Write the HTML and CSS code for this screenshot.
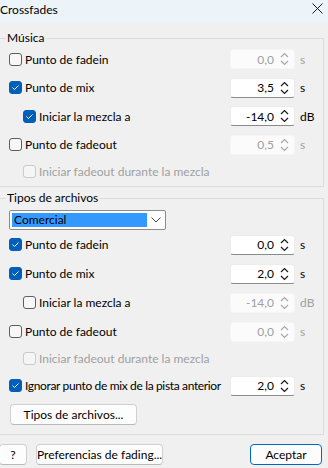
FILE: index.html
```html
<!DOCTYPE html>
<html lang="es">
<head>
    <meta charset="UTF-8">
    <title>Crossfades</title>
    <link rel="stylesheet" href="styles.css">
</head>
<body>

<div class="titlebar">
    <span class="title">Crossfades</span>
    <svg class="close" width="11" height="11" viewBox="0 0 11 11"><path d="M0.5 0.5 L10.5 10.5 M10.5 0.5 L0.5 10.5" stroke="#1a1a1a" stroke-width="1"/></svg>
</div>

<div class="group music">
    <div class="group-title">Música</div>

    <div class="row">
        <label class="check"><span class="box"></span>Punto de fadein</label>
        <div class="spin off">0,0<svg width="9" height="16" viewBox="0 0 9 16"><path d="M1 6 L4.5 2.5 L8 6 M1 10 L4.5 13.5 L8 10" fill="none" stroke="#a8a8a8" stroke-width="1.2"/></svg></div>
        <span class="unit off">s</span>
    </div>
    <div class="row">
        <label class="check"><span class="box on"><svg width="11" height="11" viewBox="0 0 11 11"><path d="M2.5 5.5 L4.5 7.5 L8.5 3.5" fill="none" stroke="#fff" stroke-width="1"/></svg></span>Punto de mix</label>
        <div class="spin">3,5<svg width="9" height="16" viewBox="0 0 9 16"><path d="M1 6 L4.5 2.5 L8 6 M1 10 L4.5 13.5 L8 10" fill="none" stroke="#1a1a1a" stroke-width="1.2"/></svg></div>
        <span class="unit">s</span>
    </div>
    <div class="row sub">
        <label class="check"><span class="box on"><svg width="11" height="11" viewBox="0 0 11 11"><path d="M2.5 5.5 L4.5 7.5 L8.5 3.5" fill="none" stroke="#fff" stroke-width="1"/></svg></span>Iniciar la mezcla a</label>
        <div class="spin">-14,0<svg width="9" height="16" viewBox="0 0 9 16"><path d="M1 6 L4.5 2.5 L8 6 M1 10 L4.5 13.5 L8 10" fill="none" stroke="#1a1a1a" stroke-width="1.2"/></svg></div>
        <span class="unit">dB</span>
    </div>
    <div class="row">
        <label class="check"><span class="box"></span>Punto de fadeout</label>
        <div class="spin off">0,5<svg width="9" height="16" viewBox="0 0 9 16"><path d="M1 6 L4.5 2.5 L8 6 M1 10 L4.5 13.5 L8 10" fill="none" stroke="#a8a8a8" stroke-width="1.2"/></svg></div>
        <span class="unit off">s</span>
    </div>
    <div class="row sub short">
        <label class="check off"><span class="box"></span>Iniciar fadeout durante la mezcla</label>
    </div>
</div>

<div class="group types">
    <div class="group-title">Tipos de archivos</div>

    <div class="select">
        <span class="selected">Comercial</span>
        <svg width="10" height="6" viewBox="0 0 10 6"><path d="M0.5 0.5 L5 5 L9.5 0.5" fill="none" stroke="#444" stroke-width="1"/></svg>
    </div>

    <div class="row">
        <label class="check"><span class="box on"><svg width="11" height="11" viewBox="0 0 11 11"><path d="M2.5 5.5 L4.5 7.5 L8.5 3.5" fill="none" stroke="#fff" stroke-width="1"/></svg></span>Punto de fadein</label>
        <div class="spin">0,0<svg width="9" height="16" viewBox="0 0 9 16"><path d="M1 6 L4.5 2.5 L8 6 M1 10 L4.5 13.5 L8 10" fill="none" stroke="#1a1a1a" stroke-width="1.2"/></svg></div>
        <span class="unit">s</span>
    </div>
    <div class="row">
        <label class="check"><span class="box on"><svg width="11" height="11" viewBox="0 0 11 11"><path d="M2.5 5.5 L4.5 7.5 L8.5 3.5" fill="none" stroke="#fff" stroke-width="1"/></svg></span>Punto de mix</label>
        <div class="spin">2,0<svg width="9" height="16" viewBox="0 0 9 16"><path d="M1 6 L4.5 2.5 L8 6 M1 10 L4.5 13.5 L8 10" fill="none" stroke="#1a1a1a" stroke-width="1.2"/></svg></div>
        <span class="unit">s</span>
    </div>
    <div class="row sub">
        <label class="check"><span class="box"></span>Iniciar la mezcla a</label>
        <div class="spin off">-14,0<svg width="9" height="16" viewBox="0 0 9 16"><path d="M1 6 L4.5 2.5 L8 6 M1 10 L4.5 13.5 L8 10" fill="none" stroke="#a8a8a8" stroke-width="1.2"/></svg></div>
        <span class="unit off">dB</span>
    </div>
    <div class="row">
        <label class="check"><span class="box"></span>Punto de fadeout</label>
        <div class="spin off">0,0<svg width="9" height="16" viewBox="0 0 9 16"><path d="M1 6 L4.5 2.5 L8 6 M1 10 L4.5 13.5 L8 10" fill="none" stroke="#a8a8a8" stroke-width="1.2"/></svg></div>
        <span class="unit off">s</span>
    </div>
    <div class="row sub short">
        <label class="check off"><span class="box"></span>Iniciar fadeout durante la mezcla</label>
    </div>
    <div class="row">
        <label class="check long"><span class="box on"><svg width="11" height="11" viewBox="0 0 11 11"><path d="M2.5 5.5 L4.5 7.5 L8.5 3.5" fill="none" stroke="#fff" stroke-width="1"/></svg></span>Ignorar punto de mix de la pista anterior</label>
        <div class="spin">2,0<svg width="9" height="16" viewBox="0 0 9 16"><path d="M1 6 L4.5 2.5 L8 6 M1 10 L4.5 13.5 L8 10" fill="none" stroke="#1a1a1a" stroke-width="1.2"/></svg></div>
        <span class="unit">s</span>
    </div>

    <button class="btn types-btn">Tipos de archivos...</button>
</div>

<div class="footer">
    <button class="btn help">?</button>
    <button class="btn prefs">Preferencias de fading...</button>
    <button class="btn ok">Aceptar</button>
</div>

</body>
</html>
```

FILE: styles.css
```css
body {
    margin: 0;
    width: 328px;
    height: 468px;
    overflow: hidden;
    background: #f0f0f0;
    font-family: Lato, "Liberation Sans", sans-serif;
    font-size: 12px;
    color: #000;
}

.titlebar {
    height: 23px;
    background: #edf4f9;
    display: flex;
    align-items: center;
    justify-content: space-between;
    padding-right: 5px;
}

.title {
    line-height: 16px;
    margin-top: -4px;
}

.close {
    margin-top: -6px;
}

/* group boxes */
.group {
    border: 1px solid #dcdcdc;
    border-left: none;
    margin-right: 4px;
}

.music {
    margin-top: 15px;
    padding-bottom: 2px;
}

.types {
    margin-top: 11px;
    padding-bottom: 9px;
}

.group-title {
    width: fit-content;
    height: 16px;
    line-height: 16px;
    margin: -9px 0 0 6px;
    padding: 0 1px;
    background: #f0f0f0;
}

.music .row {
    height: 28.5px;
}

.music .group-title {
    margin-bottom: -1px;
}

.row {
    display: flex;
    align-items: center;
    height: 29px;
    padding-left: 9px;
}

.row.sub {
    padding-left: 23px;
}

.row.short {
    height: 25px;
}

.check {
    display: flex;
    align-items: center;
    flex: 1;
    min-width: 0;
    white-space: nowrap;
}

.check.long {
    letter-spacing: -0.35px;
}

.check.off {
    color: #a0a0a0;
}

.box {
    width: 11px;
    height: 11px;
    flex-shrink: 0;
    border: 1px solid #5f5f5f;
    border-radius: 3px;
    background: #f7f7f7;
    margin-right: 3px;
    display: flex;
}

.box.on {
    background: #005fb8;
    border-color: #005fb8;
}

.check.off .box {
    border-color: #cacaca;
    background: #f5f5f5;
}

.spin {
    flex-shrink: 0;
    width: 53px;
    height: 18px;
    padding-right: 5px;
    padding-left: 5px;
    background: #fff;
    border: 1px solid #ececec;
    border-bottom-color: #8a8a8a;
    border-radius: 3px;
    display: flex;
    align-items: center;
    justify-content: flex-end;
    gap: 6px;
}

.spin.off {
    background: #fbfbfb;
    border-color: #f5f5f5;
    color: #a0a0a0;
}

.unit {
    flex-shrink: 0;
    width: 28px;
    padding-left: 5px;
    box-sizing: border-box;
}

.unit.off {
    color: #a0a0a0;
}

/* dropdown */
.select {
    margin: 4px 0 0 9px;
    width: 149px;
    height: 18px;
    border: 1px solid #8c8c8c;
    border-radius: 2px;
    background: #fff;
    display: flex;
    align-items: center;
    padding: 0 4px 0 2px;
    justify-content: space-between;
}

.selected {
    background: #3399ff;
    color: #000;
    width: 133px;
    height: 14px;
    line-height: 14px;
    padding-left: 2px;
}

/* buttons */
.btn {
    font-family: inherit;
    font-size: 12px;
    height: 21px;
    background: #fdfdfd;
    border: 1px solid #d0d0d0;
    border-bottom-color: #b8b8b8;
    border-radius: 4px;
    padding: 0;
    color: #000;
    white-space: nowrap;
}

.types-btn {
    margin: 4px 0 0 10px;
    width: 127px;
}

.footer {
    display: flex;
    margin-top: 9px;
    padding-right: 6px;
}

.help {
    width: 28px;
    margin-left: -1px;
}

.prefs {
    width: 127px;
    margin-left: 9px;
}

.ok {
    width: 72px;
    margin-left: auto;
    border: 1px solid #0067c0;
}
```
